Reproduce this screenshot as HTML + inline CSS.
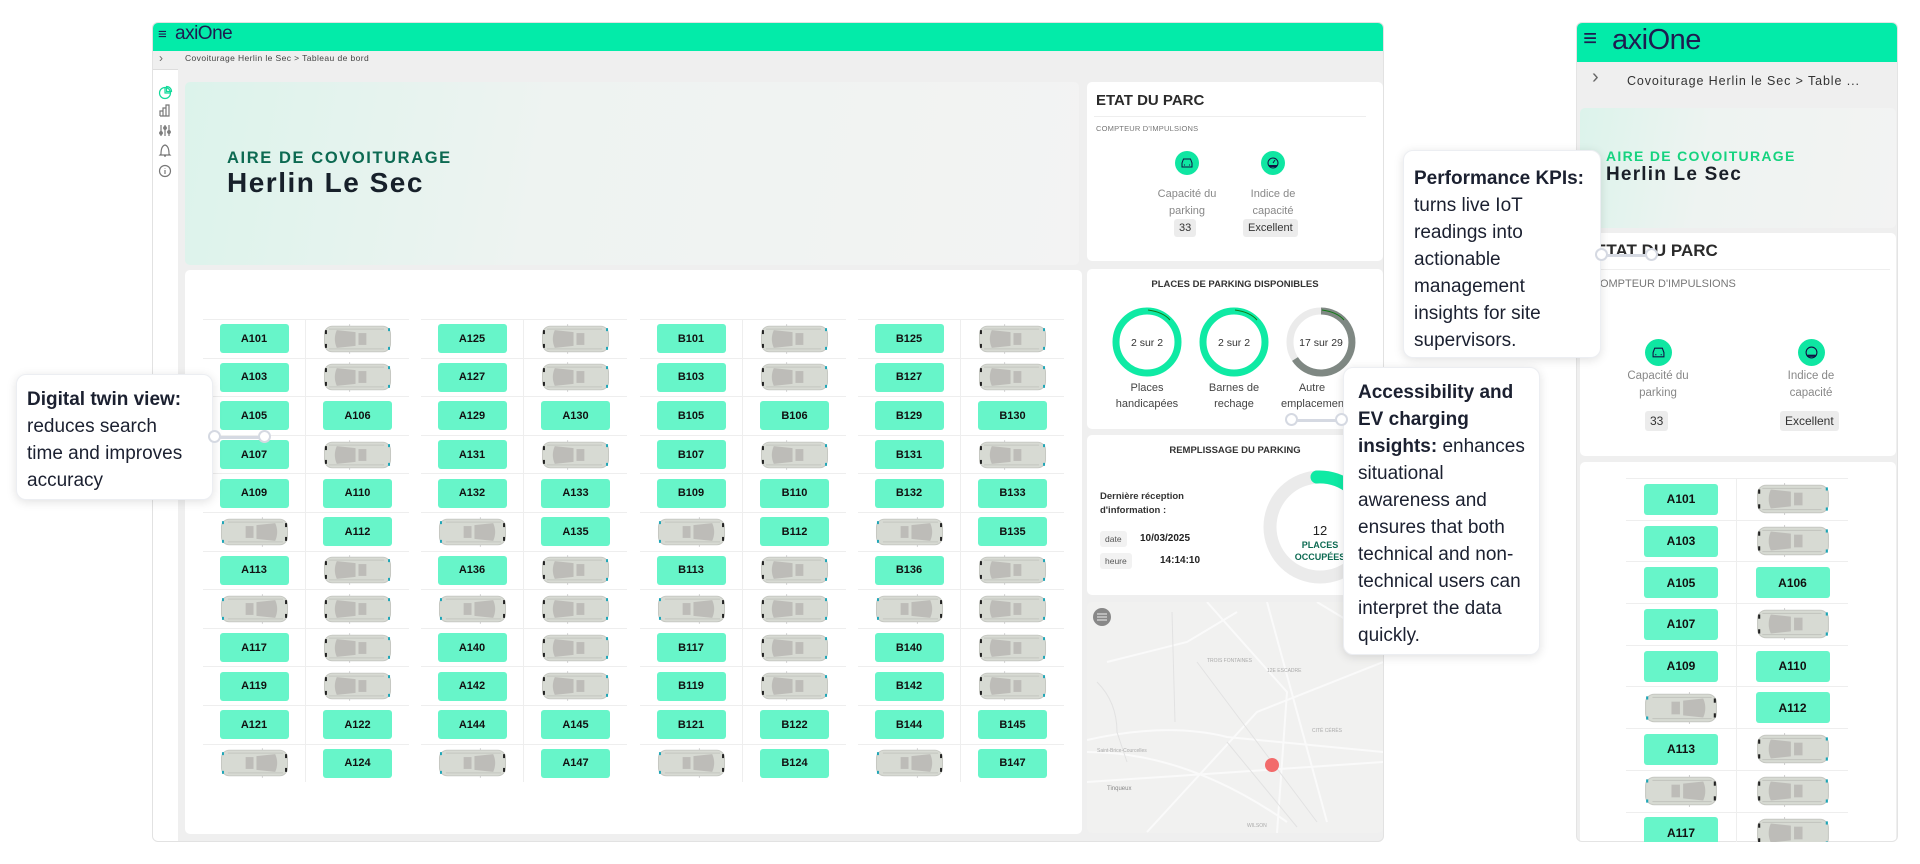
<!DOCTYPE html>
<html><head><meta charset="utf-8">
<style>
*{box-sizing:border-box;margin:0;padding:0}
body{width:1920px;height:864px;background:#fff;position:relative;overflow:hidden;font-family:"Liberation Sans",Arial,sans-serif;color:#222}
.a{position:absolute}
i{font-style:normal}
.win{left:152px;top:22px;width:1232px;height:820px;background:#efefef;border:1px solid #e2e2e2;border-radius:6px;overflow:hidden}
.hdr{background:#03eba9}
.card{background:#fff;border-radius:5px}
.grp{width:206px}
.row{height:38.6px;border-top:1px solid #eeeeee;display:flex}
.cell{width:103px;display:flex;align-items:center;justify-content:center}
.cell:first-child{border-right:1px solid #eeeeee}
.l{width:69px;height:29px;background:#67f5c9;border-radius:3px;display:flex;align-items:center;justify-content:center;font-size:11px;font-weight:bold;color:#111}
.cell svg{width:69px;height:30px}
.f{transform:scaleX(-1)}
.m .row{height:41.7px}
.m .cell{width:111px}
.m .l{width:74px;height:31px;font-size:12px}
.m .cell svg{width:74px;height:32px}
.co{background:#fff;border-radius:10px;box-shadow:0 2px 10px rgba(0,0,0,.12);border:1px solid #eceef2;font-size:19px;line-height:27px;color:#1b2030;padding:0 10px}
.dot{width:13px;height:13px;border:2px solid #d5d9e2;border-radius:50%;background:#fff}
.ln{height:3px;background:#d5d9e2}
.badge{background:#ececec;border-radius:3px;font-size:11px;color:#333;padding:3px 5px;display:inline-block}
.ic{border-radius:50%;background:#0fe6a2;display:flex;align-items:center;justify-content:center}
</style></head><body>
<svg width="0" height="0" style="position:absolute"><defs>
<symbol id="car" viewBox="0 0 70 30">
<rect x="1.5" y="2" width="67" height="26" rx="8" fill="#d7dad3" stroke="#c6c8c2"/>
<path d="M6 5 L62 5 M6 25 L62 25" stroke="#c4c6c0" stroke-width="1"/>
<path d="M14 6 Q10 15 14 24 L33 22 L33 8 Z" fill="#bdbcb8"/>
<rect x="36" y="9" width="8" height="12" fill="#bdbcb8"/>
<path d="M27 0 L27 2 M27 28 L27 30" stroke="#ccc"/>
<rect x="2" y="6" width="2" height="4" fill="#222"/><rect x="2" y="20" width="2" height="4" fill="#222"/>
<rect x="66" y="4" width="2" height="3" fill="#1ea5b6"/><rect x="66" y="23" width="2" height="3" fill="#1ea5b6"/>
</symbol>
</defs></svg>

<!-- MAIN WINDOW -->
<div class="a win">
 <div class="a hdr" style="left:0;top:0;width:1232px;height:28px"></div>
 <div class="a" style="left:5px;top:3px;font-size:15px;color:#1e1c50">≡</div>
 <div class="a" style="left:22px;top:0px;font-size:19px;color:#1e1c50;letter-spacing:-0.5px">axiOne</div>
 <div class="a" style="left:0;top:28px;width:25px;height:800px;background:#fff"></div>
 <div class="a" style="left:0;top:28px;width:25px;height:19px;background:#efefef;border-bottom:1px solid #ddd"></div>
 <div class="a" style="left:6px;top:28px;font-size:12px;color:#666">›</div>
 <div class="a" style="left:32px;top:24px;font-size:8.5px;color:#444;letter-spacing:.4px;line-height:10px;margin-top:6px">Covoiturage Herlin le Sec &gt; Tableau de bord</div>
 <svg class="a" style="left:4px;top:62px" width="16" height="100" viewBox="0 0 16 100" fill="none" stroke-width="1.2">
  <circle cx="8" cy="8" r="5.5" stroke="#12d99a"/><path d="M8 2.5 V8 H13.5" stroke="#12d99a"/><path d="M9.5 1.5 V6.5 H14.5 A5 5 0 0 0 9.5 1.5Z" stroke="#12d99a"/>
  <path d="M3 31 V26 H6 V31 M6 31 V23 H9 V31 M9 31 V20 H12 V31 H3" stroke="#777"/>
  <path d="M4 40 V51 M8 40 V51 M12 40 V51" stroke="#777"/><circle cx="4" cy="48" r="1.3" stroke="#777"/><circle cx="8" cy="43" r="1.3" stroke="#777"/><circle cx="12" cy="47" r="1.3" stroke="#777"/>
  <path d="M4 69 Q4 61 8 60 Q12 61 12 69 L13 70 H3Z M7 71 H9" stroke="#777"/>
  <circle cx="8" cy="86" r="5.5" stroke="#777"/><path d="M8 85 V89 M8 83 V83.5" stroke="#777"/>
 </svg>
 <div class="a" style="left:32px;top:59px;width:894px;height:183px;border-radius:5px;background:linear-gradient(100deg,#dcf3eb 0%,#eef3f1 40%,#f3f3f3 100%)"></div>
 <div class="a" style="left:74px;top:126px;font-size:16.5px;font-weight:bold;letter-spacing:1.6px;color:#0c6a52">AIRE DE COVOITURAGE</div>
 <div class="a" style="left:74px;top:144px;font-size:28px;font-weight:bold;letter-spacing:1.5px;color:#17202a">Herlin Le Sec</div>
 <div class="a card" style="left:32px;top:247px;width:897px;height:564px"></div>
</div>

<!-- GRID groups main -->
<div class="a grp" style="left:203px;top:319px">
<div class="row"><div class="cell"><i class="l">A101</i></div><div class="cell"><svg><use href="#car"/></svg></div></div>
<div class="row"><div class="cell"><i class="l">A103</i></div><div class="cell"><svg><use href="#car"/></svg></div></div>
<div class="row"><div class="cell"><i class="l">A105</i></div><div class="cell"><i class="l">A106</i></div></div>
<div class="row"><div class="cell"><i class="l">A107</i></div><div class="cell"><svg><use href="#car"/></svg></div></div>
<div class="row"><div class="cell"><i class="l">A109</i></div><div class="cell"><i class="l">A110</i></div></div>
<div class="row"><div class="cell"><svg class="f"><use href="#car"/></svg></div><div class="cell"><i class="l">A112</i></div></div>
<div class="row"><div class="cell"><i class="l">A113</i></div><div class="cell"><svg><use href="#car"/></svg></div></div>
<div class="row"><div class="cell"><svg class="f"><use href="#car"/></svg></div><div class="cell"><svg><use href="#car"/></svg></div></div>
<div class="row"><div class="cell"><i class="l">A117</i></div><div class="cell"><svg><use href="#car"/></svg></div></div>
<div class="row"><div class="cell"><i class="l">A119</i></div><div class="cell"><svg><use href="#car"/></svg></div></div>
<div class="row"><div class="cell"><i class="l">A121</i></div><div class="cell"><i class="l">A122</i></div></div>
<div class="row"><div class="cell"><svg class="f"><use href="#car"/></svg></div><div class="cell"><i class="l">A124</i></div></div>
</div>
<div class="a grp" style="left:421px;top:319px">
<div class="row"><div class="cell"><i class="l">A125</i></div><div class="cell"><svg><use href="#car"/></svg></div></div>
<div class="row"><div class="cell"><i class="l">A127</i></div><div class="cell"><svg><use href="#car"/></svg></div></div>
<div class="row"><div class="cell"><i class="l">A129</i></div><div class="cell"><i class="l">A130</i></div></div>
<div class="row"><div class="cell"><i class="l">A131</i></div><div class="cell"><svg><use href="#car"/></svg></div></div>
<div class="row"><div class="cell"><i class="l">A132</i></div><div class="cell"><i class="l">A133</i></div></div>
<div class="row"><div class="cell"><svg class="f"><use href="#car"/></svg></div><div class="cell"><i class="l">A135</i></div></div>
<div class="row"><div class="cell"><i class="l">A136</i></div><div class="cell"><svg><use href="#car"/></svg></div></div>
<div class="row"><div class="cell"><svg class="f"><use href="#car"/></svg></div><div class="cell"><svg><use href="#car"/></svg></div></div>
<div class="row"><div class="cell"><i class="l">A140</i></div><div class="cell"><svg><use href="#car"/></svg></div></div>
<div class="row"><div class="cell"><i class="l">A142</i></div><div class="cell"><svg><use href="#car"/></svg></div></div>
<div class="row"><div class="cell"><i class="l">A144</i></div><div class="cell"><i class="l">A145</i></div></div>
<div class="row"><div class="cell"><svg class="f"><use href="#car"/></svg></div><div class="cell"><i class="l">A147</i></div></div>
</div>
<div class="a grp" style="left:640px;top:319px">
<div class="row"><div class="cell"><i class="l">B101</i></div><div class="cell"><svg><use href="#car"/></svg></div></div>
<div class="row"><div class="cell"><i class="l">B103</i></div><div class="cell"><svg><use href="#car"/></svg></div></div>
<div class="row"><div class="cell"><i class="l">B105</i></div><div class="cell"><i class="l">B106</i></div></div>
<div class="row"><div class="cell"><i class="l">B107</i></div><div class="cell"><svg><use href="#car"/></svg></div></div>
<div class="row"><div class="cell"><i class="l">B109</i></div><div class="cell"><i class="l">B110</i></div></div>
<div class="row"><div class="cell"><svg class="f"><use href="#car"/></svg></div><div class="cell"><i class="l">B112</i></div></div>
<div class="row"><div class="cell"><i class="l">B113</i></div><div class="cell"><svg><use href="#car"/></svg></div></div>
<div class="row"><div class="cell"><svg class="f"><use href="#car"/></svg></div><div class="cell"><svg><use href="#car"/></svg></div></div>
<div class="row"><div class="cell"><i class="l">B117</i></div><div class="cell"><svg><use href="#car"/></svg></div></div>
<div class="row"><div class="cell"><i class="l">B119</i></div><div class="cell"><svg><use href="#car"/></svg></div></div>
<div class="row"><div class="cell"><i class="l">B121</i></div><div class="cell"><i class="l">B122</i></div></div>
<div class="row"><div class="cell"><svg class="f"><use href="#car"/></svg></div><div class="cell"><i class="l">B124</i></div></div>
</div>
<div class="a grp" style="left:858px;top:319px">
<div class="row"><div class="cell"><i class="l">B125</i></div><div class="cell"><svg><use href="#car"/></svg></div></div>
<div class="row"><div class="cell"><i class="l">B127</i></div><div class="cell"><svg><use href="#car"/></svg></div></div>
<div class="row"><div class="cell"><i class="l">B129</i></div><div class="cell"><i class="l">B130</i></div></div>
<div class="row"><div class="cell"><i class="l">B131</i></div><div class="cell"><svg><use href="#car"/></svg></div></div>
<div class="row"><div class="cell"><i class="l">B132</i></div><div class="cell"><i class="l">B133</i></div></div>
<div class="row"><div class="cell"><svg class="f"><use href="#car"/></svg></div><div class="cell"><i class="l">B135</i></div></div>
<div class="row"><div class="cell"><i class="l">B136</i></div><div class="cell"><svg><use href="#car"/></svg></div></div>
<div class="row"><div class="cell"><svg class="f"><use href="#car"/></svg></div><div class="cell"><svg><use href="#car"/></svg></div></div>
<div class="row"><div class="cell"><i class="l">B140</i></div><div class="cell"><svg><use href="#car"/></svg></div></div>
<div class="row"><div class="cell"><i class="l">B142</i></div><div class="cell"><svg><use href="#car"/></svg></div></div>
<div class="row"><div class="cell"><i class="l">B144</i></div><div class="cell"><i class="l">B145</i></div></div>
<div class="row"><div class="cell"><svg class="f"><use href="#car"/></svg></div><div class="cell"><i class="l">B147</i></div></div>
</div>

<!-- RIGHT COLUMN -->
<div class="a card" style="left:1087px;top:82px;width:296px;height:179px"></div>
<div class="a" style="left:1096px;top:92px;font-size:15px;font-weight:bold;color:#2a2a2a">ETAT DU PARC</div>
<div class="a" style="left:1094px;top:116px;width:272px;height:1px;background:#eee"></div>
<div class="a" style="left:1096px;top:124px;font-size:7.5px;color:#777;letter-spacing:.2px">COMPTEUR D'IMPULSIONS</div>
<div class="a ic" style="left:1175px;top:151px;width:24px;height:24px"><svg width="12" height="10" viewBox="0 0 12 10"><path d="M1 5 L2.5 1 H9.5 L11 5 V9 H1Z M3 7h1 M8 7h1" stroke="#114" fill="none"/></svg></div>
<div class="a ic" style="left:1261px;top:151px;width:24px;height:24px"><svg width="12" height="12" viewBox="0 0 12 12"><circle cx="6" cy="6" r="5" stroke="#114" fill="none"/><path d="M2 8 H10 V10 H2Z" fill="#114"/><path d="M6 6 L8 3" stroke="#114"/></svg></div>
<div class="a" style="left:1137px;top:186px;width:100px;text-align:center;font-size:11px;line-height:17px;color:#888">Capacité du<br>parking</div>
<div class="a" style="left:1223px;top:186px;width:100px;text-align:center;font-size:11px;line-height:17px;color:#888">Indice de<br>capacité</div>
<div class="a badge" style="left:1174px;top:219px">33</div>
<div class="a badge" style="left:1243px;top:219px">Excellent</div>

<div class="a card" style="left:1087px;top:269px;width:296px;height:160px"></div>
<div class="a" style="left:1087px;top:279px;width:296px;text-align:center;font-size:9.5px;font-weight:bold;color:#333">PLACES DE PARKING DISPONIBLES</div>
<svg class="a" style="left:1100px;top:300px" width="270" height="90" viewBox="1100 300 270 90">
 <circle cx="1147" cy="342" r="31" fill="none" stroke="#0feaa4" stroke-width="7"/>
 <circle cx="1234" cy="342" r="31" fill="none" stroke="#0feaa4" stroke-width="7"/>
 <circle cx="1321" cy="342" r="31" fill="none" stroke="#ebebeb" stroke-width="7"/>
 <path d="M1321 311 A31 31 0 1 1 1295 359" fill="none" stroke="#7f8883" stroke-width="7"/>
 <path d="M1148 310 Q1163 312 1170 320 M1235 310 Q1250 312 1257 320 M1322 310 Q1337 312 1344 320" stroke="#127a16" fill="none"/>
 <text x="1147" y="346" font-size="10.5" text-anchor="middle" fill="#333" font-family="Liberation Sans">2 sur 2</text>
 <text x="1234" y="346" font-size="10.5" text-anchor="middle" fill="#333" font-family="Liberation Sans">2 sur 2</text>
 <text x="1321" y="346" font-size="10.5" text-anchor="middle" fill="#333" font-family="Liberation Sans">17 sur 29</text>
</svg>
<div class="a" style="left:1107px;top:380px;width:80px;text-align:center;font-size:11px;line-height:16px;color:#444">Places<br>handicapées</div>
<div class="a" style="left:1194px;top:380px;width:80px;text-align:center;font-size:11px;line-height:16px;color:#444">Barnes de<br>rechage</div>
<div class="a" style="left:1281px;top:380px;width:62px;overflow:hidden;white-space:nowrap;text-align:center;font-size:11px;line-height:16px;color:#444">Autre<br>emplacements</div>

<div class="a card" style="left:1087px;top:435px;width:296px;height:160px;overflow:hidden">
 <div class="a" style="left:0;top:10px;width:296px;text-align:center;font-size:9.5px;font-weight:bold;color:#333">REMPLISSAGE DU PARKING</div>
 <div class="a" style="left:13px;top:55px;font-size:9.5px;line-height:14px;font-weight:bold;color:#333">Dernière réception<br>d'information :</div>
 <div class="a badge" style="left:13px;top:96px;font-size:8.5px;background:#f2f2f2;color:#555">date</div>
 <div class="a" style="left:53px;top:98px;font-size:10px;font-weight:bold;color:#222">10/03/2025</div>
 <div class="a badge" style="left:13px;top:118px;font-size:8.5px;background:#f2f2f2;color:#555">heure</div>
 <div class="a" style="left:73px;top:120px;font-size:10px;font-weight:bold;color:#222">14:14:10</div>
 <svg class="a" style="left:170px;top:30px" width="126" height="130" viewBox="0 0 126 130">
  <circle cx="63" cy="62" r="50" fill="none" stroke="#ebebeb" stroke-width="13"/>
  <path d="M60 12 A50 50 0 0 1 95 24" fill="none" stroke="#0feaa4" stroke-width="13" stroke-linecap="round"/>
 </svg>
 <div class="a" style="left:200px;top:88px;width:66px;text-align:center;font-size:13px;color:#222">12</div>
 <div class="a" style="left:195px;top:104px;width:76px;text-align:center;font-size:9px;line-height:12px;font-weight:bold;color:#0c6a52">PLACES<br>OCCUPÉES</div>
</div>

<div class="a" style="left:1087px;top:602px;width:296px;height:231px;background:#f1f1f0;border-radius:5px;overflow:hidden">
 <svg width="296" height="231" viewBox="0 0 296 231">
  <g stroke="#fafafa" stroke-width="2" fill="none">
   <path d="M0 138 Q80 120 140 135 L296 150"/><path d="M0 150 Q100 150 200 220"/><path d="M20 60 L100 40 L150 10"/><path d="M180 0 L240 220"/><path d="M0 180 L296 160"/><path d="M120 0 L200 90 L190 231"/><path d="M60 230 L170 110 L296 60"/><path d="M230 0 L296 40"/>
  </g>
  <g stroke="#e2e2e2" stroke-width="1" fill="none">
   <path d="M85 10 L88 120"/><path d="M10 80 Q30 100 30 130 L40 160"/><path d="M110 60 L230 220"/><path d="M140 140 L210 225"/>
  </g>
  <g font-size="5" fill="#aaa" font-family="Liberation Sans"><text x="120" y="60">TROIS FONTAINES</text><text x="180" y="70">12E ESCADRE</text><text x="10" y="150">Saint-Brice-Courcelles</text><text x="20" y="188" font-size="6" fill="#888">Tinqueux</text><text x="225" y="130">CITÉ CÉRÈS</text><text x="160" y="225">WILSON</text></g>
  <circle cx="15" cy="15" r="9" fill="#888"/><path d="M10 12 H20 M10 15 H20 M10 18 H20" stroke="#eee"/>
  <circle cx="185" cy="163" r="7" fill="#f26b6b"/>
 </svg>
</div>

<!-- MOBILE WINDOW -->
<div class="a" style="left:1576px;top:22px;width:322px;height:820px;background:#efefef;border-radius:6px;overflow:hidden;border:1px solid #e4e4e4">
 <div class="a hdr" style="left:0;top:0;width:322px;height:39px"></div>
 <div class="a" style="left:6px;top:2px;font-size:24px;color:#1e1c50">≡</div>
 <div class="a" style="left:35px;top:1px;font-size:29px;color:#1e1c50;letter-spacing:-0.5px">axiOne</div>
 <div class="a" style="left:15px;top:43px;font-size:20px;color:#666">›</div>
 <div class="a" style="left:50px;top:51px;font-size:12.5px;color:#333;letter-spacing:.9px;white-space:nowrap">Covoiturage Herlin le Sec &gt; Table ...</div>
 <div class="a" style="left:3px;top:85px;width:316px;height:120px;border-radius:5px;background:linear-gradient(100deg,#dcf3eb 0%,#eef3f1 40%,#f3f3f3 100%)"></div>
 <div class="a card" style="left:3px;top:210px;width:316px;height:223px"></div>
 <div class="a card" style="left:3px;top:439px;width:316px;height:390px"></div>
</div>
<div class="a" style="left:1606px;top:148px;font-size:14px;font-weight:bold;letter-spacing:1.3px;color:#15d37f">AIRE DE COVOITURAGE</div>
<div class="a" style="left:1606px;top:164px;font-size:19px;font-weight:bold;letter-spacing:1.2px;color:#1a1f28">Herlin Le Sec</div>
<div class="a" style="left:1595px;top:241px;font-size:17px;font-weight:bold;color:#2a2a2a">ETAT DU PARC</div>
<div class="a" style="left:1586px;top:269px;width:304px;height:1px;background:#eee"></div>
<div class="a" style="left:1592px;top:278px;font-size:11px;color:#777">COMPTEUR D'IMPULSIONS</div>
<div class="a ic" style="left:1645px;top:339px;width:27px;height:27px"><svg width="13" height="11" viewBox="0 0 12 10"><path d="M1 5 L2.5 1 H9.5 L11 5 V9 H1Z M3 7h1 M8 7h1" stroke="#114" fill="none"/></svg></div>
<div class="a ic" style="left:1798px;top:339px;width:27px;height:27px"><svg width="13" height="13" viewBox="0 0 12 12"><circle cx="6" cy="6" r="5" stroke="#114" fill="none"/><path d="M2 8 H10 V10 H2Z" fill="#114"/></svg></div>
<div class="a" style="left:1608px;top:368px;width:100px;text-align:center;font-size:11.5px;line-height:17px;color:#888">Capacité du<br>parking</div>
<div class="a" style="left:1761px;top:368px;width:100px;text-align:center;font-size:11.5px;line-height:17px;color:#888">Indice de<br>capacité</div>
<div class="a badge" style="left:1645px;top:411px;font-size:12px">33</div>
<div class="a badge" style="left:1780px;top:411px;font-size:12px">Excellent</div>

<div class="a grp m" style="left:1626px;top:478px;width:222px;height:364px;overflow:hidden">
<div class="row"><div class="cell"><i class="l">A101</i></div><div class="cell"><svg><use href="#car"/></svg></div></div>
<div class="row"><div class="cell"><i class="l">A103</i></div><div class="cell"><svg><use href="#car"/></svg></div></div>
<div class="row"><div class="cell"><i class="l">A105</i></div><div class="cell"><i class="l">A106</i></div></div>
<div class="row"><div class="cell"><i class="l">A107</i></div><div class="cell"><svg><use href="#car"/></svg></div></div>
<div class="row"><div class="cell"><i class="l">A109</i></div><div class="cell"><i class="l">A110</i></div></div>
<div class="row"><div class="cell"><svg class="f"><use href="#car"/></svg></div><div class="cell"><i class="l">A112</i></div></div>
<div class="row"><div class="cell"><i class="l">A113</i></div><div class="cell"><svg><use href="#car"/></svg></div></div>
<div class="row"><div class="cell"><svg class="f"><use href="#car"/></svg></div><div class="cell"><svg><use href="#car"/></svg></div></div>
<div class="row"><div class="cell"><i class="l">A117</i></div><div class="cell"><svg><use href="#car"/></svg></div></div>
</div>

<!-- CALLOUTS -->
<div class="a co" style="left:16px;top:374px;width:197px;height:126px;padding-top:11px"><b>Digital twin view:</b><br>reduces search<br>time and improves<br>accuracy</div>
<div class="a ln" style="left:215px;top:436px;width:50px"></div>
<div class="a dot" style="left:208px;top:430px"></div><div class="a dot" style="left:258px;top:430px"></div>

<div class="a co" style="left:1403px;top:150px;width:198px;height:208px;padding-top:14px"><b>Performance KPIs:</b><br>turns live IoT<br>readings into<br>actionable<br>management<br>insights for site<br>supervisors.</div>
<div class="a ln" style="left:1602px;top:254px;width:50px"></div>
<div class="a dot" style="left:1595px;top:248px"></div><div class="a dot" style="left:1645px;top:248px"></div>

<div class="a co" style="left:1343px;top:367px;width:197px;height:288px;padding-top:11px;padding-left:14px"><b>Accessibility and<br>EV charging<br>insights:</b> enhances<br>situational<br>awareness and<br>ensures that both<br>technical and non-<br>technical users can<br>interpret the data<br>quickly.</div>
<div class="a ln" style="left:1292px;top:419px;width:50px"></div>
<div class="a dot" style="left:1285px;top:413px"></div><div class="a dot" style="left:1335px;top:413px"></div>
</body></html>
